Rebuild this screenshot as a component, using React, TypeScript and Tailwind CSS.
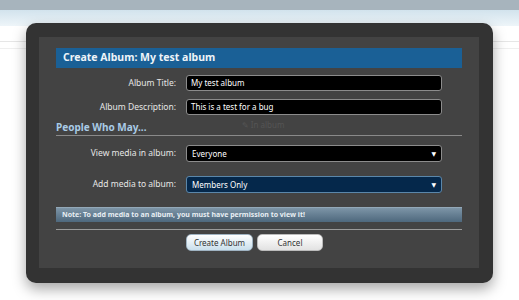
import React from "react";

const font = { fontFamily: '"Noto Sans", "DejaVu Sans", sans-serif' };

function Field({ label, value }: { label: string; value: string }) {
  return (
    <div className="flex items-center">
      <div className="w-[120px] shrink-0 text-right text-[8.5px] text-[#e6e6e6]">{label}</div>
      <div className="ml-[10px] flex h-[16px] w-[256px] items-center rounded-[3px] border border-[#8c8c8c] bg-black px-[4px] text-[8px] text-white">
        {value}
      </div>
    </div>
  );
}

function SelectRow({ label, value, navy }: { label: string; value: string; navy?: boolean }) {
  return (
    <div className="flex items-center">
      <div className="w-[120px] shrink-0 text-right text-[8.5px] text-[#e6e6e6]">{label}</div>
      <div
        className={
          navy
            ? "ml-[10px] flex h-[17px] w-[256px] items-center justify-between rounded-[3px] border border-[#5b87aa] bg-[#05284b] px-[5px] text-[8px] text-white"
            : "ml-[10px] flex h-[17px] w-[256px] items-center justify-between rounded-[3px] border border-[#8c8c8c] bg-black px-[5px] text-[8px] text-white"
        }
      >
        <span>{value}</span>
        <span className="text-[6px] leading-none">▼</span>
      </div>
    </div>
  );
}

export default function App() {
  return (
    <div className="relative h-[300px] w-[519px] overflow-hidden bg-white" style={font}>
      <div className="h-[10px] bg-[#a7b4bd]" />
      <div className="h-[16px] bg-gradient-to-b from-[#d2e3ed] to-[#eef5f9]" />
      <div className="mt-[15px] h-px bg-[#e6e6e6]" />
      <div className="mt-[6px] h-px bg-[#efefef]" />

      <div className="absolute left-[26px] top-[23px] w-[467px] rounded-[10px] bg-[#333333] pb-[15px] pl-[13px] pr-[14px] pt-[14px] shadow-[0_6px_14px_rgba(0,0,0,0.35)]">
        <div className="bg-[#434343] px-[17px] pb-[17px] pt-[11px]">
          <div className="flex h-[20px] items-center bg-[#1a6096] px-[7px] text-[10.5px] font-bold text-[#eef4f9]">
            Create Album: My test album
          </div>

          <div className="mt-[7px] flex flex-col gap-[8px]">
            <Field label="Album Title:" value="My test album" />
            <Field label="Album Description:" value="This is a test for a bug" />
          </div>

          <div className="relative mt-[5px] h-[16px] border-b border-[#8a8a8a] text-[10px] leading-[14px]">
            <span className="font-bold text-[#a9cbe6]">People Who May...</span>
            <span className="absolute left-[186px] top-[-2px] text-[8px] text-[#555555]">✎ In album</span>
          </div>

          <div className="mt-[9px] flex flex-col gap-[14px]">
            <SelectRow label="View media in album:" value="Everyone" />
            <SelectRow label="Add media to album:" value="Members Only" navy />
          </div>

          <div className="mt-[14px] flex h-[15px] items-center border-t border-[#93a8b8] bg-gradient-to-b from-[#7d95a7] to-[#4e687d] px-[6px] text-[7px] font-bold text-[#e8eef3]">
            Note: To add media to an album, you must have permission to view it!
          </div>

          <div className="mt-[7px] h-px bg-[#9a9a9a]" />

          <div className="mt-[4px] flex gap-[4px] pl-[130px]">
            <button className="h-[17px] w-[67px] rounded-[5px] border border-[#9fb3c2] bg-gradient-to-b from-[#ffffff] to-[#c9dfec] text-[8px] text-[#333333]">
              Create Album
            </button>
            <button className="h-[17px] w-[66px] rounded-[5px] border border-[#bbbbbb] bg-gradient-to-b from-[#ffffff] to-[#e2e2e2] text-[8px] text-[#333333]">
              Cancel
            </button>
          </div>
        </div>
      </div>
    </div>
  );
}
